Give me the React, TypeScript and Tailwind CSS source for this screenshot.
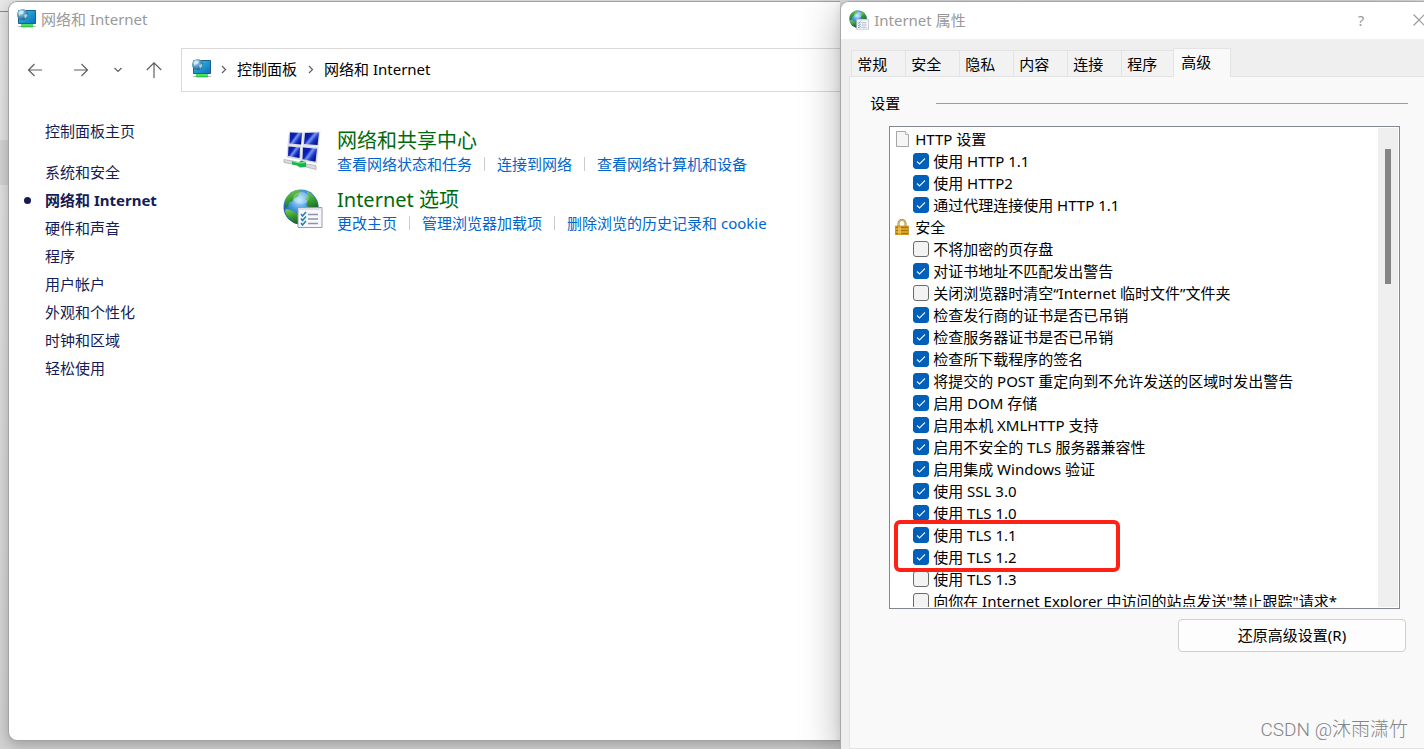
import React, { useState } from 'react';

const NetworkPlaceIcon: React.FC = () => (
  <svg className="size-5 shrink-0" viewBox="0 0 20 20" aria-hidden="true">
    <defs>
      <linearGradient id="npScreen" x1="0" y1="0" x2="1" y2="1">
        <stop offset="0" stopColor="#35c3dc" />
        <stop offset="1" stopColor="#0c6fc0" />
      </linearGradient>
      <radialGradient id="npGlobe" cx="0.35" cy="0.3" r="0.75">
        <stop offset="0" stopColor="#d3ecf8" />
        <stop offset="0.5" stopColor="#5a9fc8" />
        <stop offset="1" stopColor="#1c5c8c" />
      </radialGradient>
    </defs>
    <path d="M1 17.5h18" stroke="#b9b9b9" />
    <path d="M4 15h12v3H4z" fill="#4fdf63" />
    <path d="M4 17.3h12v1H4z" fill="#24b443" />
    <path d="M1.5 1.500h17v13h-17z" fill="url(#npScreen)" stroke="#1b5f8d" />
    <circle cx="5.500" cy="5.500" r="5.500" fill="url(#npGlobe)" />
    <path d="M2 3.500 5 1.500l2 1.200-1 2-2.500.6L2 7zM7 6l3-1 .6 2L8 10z" fill="#e7f5fb" opacity="0.65" />
  </svg>
);

const GlobeListIcon: React.FC<{ className: string }> = ({ className }) => (
  <svg className={className} viewBox="0 0 40 40" aria-hidden="true">
    <defs>
      <radialGradient id="glSea" cx="0.45" cy="0.3" r="0.75">
        <stop offset="0" stopColor="#b5e6ff" />
        <stop offset="0.4" stopColor="#4093dc" />
        <stop offset="0.8" stopColor="#164a9c" />
        <stop offset="1" stopColor="#102c66" />
      </radialGradient>
      <linearGradient id="glLand" x1="0" y1="0" x2="0.3" y2="1">
        <stop offset="0" stopColor="#86cd62" />
        <stop offset="0.5" stopColor="#3fa635" />
        <stop offset="1" stopColor="#1d6b2a" />
      </linearGradient>
    </defs>
    <circle cx="18" cy="18" r="17.500" fill="url(#glSea)" />
    <path d="M2 11C5 5 10 1.500 15 .8l4 1.700-3 2-1 3-4 2-2 3-3 1-1 4-3 2z" fill="url(#glLand)" />
    <path d="m3 20 5 1 5 3 3 4-2 3v4C8 33 3 28 2 22z" fill="url(#glLand)" />
    <path d="m24 2 6 4 4 6 1.300 6-1 3-4-3-4 1-3-3 1-4-2-2 2-3z" fill="url(#glLand)" />
    <ellipse cx="18" cy="9" rx="8" ry="6" fill="#fff" opacity="0.25" />
    <path d="M15 18.500h24v20H15z" fill="#f8f8fb" stroke="#9a9da8" />
    <path d="M15.500 19h23v2h-23z" fill="#dcdfe8" />
    <path d="M25 25.500h10M25 30h10M25 34.500h10" stroke="#8b94a8" strokeWidth="1.300" />
    <path d="m18 25 1.500 2 3.500-4M18 29.500l1.500 2 3.500-4M18 34l1.500 2 3.500-4" fill="none" stroke="#1980c0" strokeWidth="1.500" />
  </svg>
);

const NetworkCenterIcon: React.FC = () => (
  <svg className="size-10 shrink-0" viewBox="0 0 40 40" aria-hidden="true">
    <defs>
      <linearGradient id="ncScreen" x1="0" y1="0" x2="1" y2="0.7">
        <stop offset="0" stopColor="#0718a0" />
        <stop offset="0.4" stopColor="#0b20b8" />
        <stop offset="0.55" stopColor="#7795ee" />
        <stop offset="0.75" stopColor="#1733c9" />
        <stop offset="1" stopColor="#051080" />
      </linearGradient>
    </defs>
    <g fill="#d9dce2">
      <path d="m6 1.500 14 .5-1.500 14L4.500 15z" />
      <path d="m20.500 2 17-.5-2 15-16-1z" />
      <path d="m4.500 15 14 1-1 14-14-2.500z" />
      <path d="m19 16 16.500 1-1.500 16.500-16-3z" />
    </g>
    <g fill="url(#ncScreen)">
      <path d="m7 2.500 12 .5-1 11.500-11.500-1z" />
      <path d="m22 3 14-.5-1.500 12.500-13.500-1z" />
      <path d="m5.500 16.500 11.500 1-.5 10.500L5 26z" />
      <path d="m20 17.500 14 1.200-1.500 13-13-2.500z" />
    </g>
    <path d="m1 29.500 11 2v3l-11-2zM23 34l10 1.500v4L23 37z" fill="#d9dddc" stroke="#a9afad" strokeWidth="0.800" />
    <path d="m9 31 7 1 2-1.500 5 1.500v5l-6 .5-3-2-5-1z" fill="#18b64a" />
    <path d="m10 31.500 7 1.500 5-.5" fill="none" stroke="#8ceaa2" />
  </svg>
);

const PageIcon: React.FC = () => (
  <svg className="size-4 shrink-0" viewBox="0 0 16 16" aria-hidden="true">
    <path d="M1.500.5h9l3 3v12h-12z" fill="#f5f5f5" stroke="#a5a5a5" />
    <path d="M10.500.5v3h3" fill="#fff" stroke="#b5b5b5" />
  </svg>
);

const LockIcon: React.FC = () => (
  <svg className="size-4 shrink-0" viewBox="0 0 16 16" aria-hidden="true">
    <path d="M3.500 8V4.500a3.500 3.500 0 0 1 7 0V8" fill="none" stroke="#a8863a" strokeWidth="2" />
    <path d="M3.500 8V4.500a3.500 3.500 0 0 1 7 0V8" fill="none" stroke="#e6d5a0" strokeWidth="0.700" />
    <path d="M.5 7h13v9H.5z" fill="#dba324" />
    <path d="M1 8.500h12M1 11.500h12M1 14.500h12" stroke="#a8730c" />
    <path d="M3 7.500h3v8H3z" fill="#f6d36a" opacity="0.600" />
    <path d="M.5 7h13v9H.5z" fill="none" stroke="#b17f18" strokeWidth="0.700" />
  </svg>
);

const ArrowIcon: React.FC<{ d: string; className: string }> = ({ d, className }) => (
  <svg className={className} viewBox="0 0 16 16" fill="none" stroke="currentColor" strokeWidth="1.2" aria-hidden="true">
    <path d={d} />
  </svg>
);

const categories = ['系统和安全', '网络和 Internet', '硬件和声音', '程序', '用户帐户', '外观和个性化', '时钟和区域', '轻松使用'];

const sections = [
  {
    title: '网络和共享中心',
    icon: <NetworkCenterIcon />,
    links: ['查看网络状态和任务', '连接到网络', '查看网络计算机和设备'],
  },
  {
    title: 'Internet 选项',
    icon: <GlobeListIcon className="size-10 shrink-0" />,
    links: ['更改主页', '管理浏览器加载项', '删除浏览的历史记录和 cookie'],
  },
];

const tabs = ['常规', '安全', '隐私', '内容', '连接', '程序', '高级'];

const settingGroups = [
  {
    name: 'HTTP 设置',
    icon: <PageIcon />,
    options: [
      { label: '使用 HTTP 1.1', on: true },
      { label: '使用 HTTP2', on: true },
      { label: '通过代理连接使用 HTTP 1.1', on: true },
    ],
  },
  {
    name: '安全',
    icon: <LockIcon />,
    options: [
      { label: '不将加密的页存盘', on: false },
      { label: '对证书地址不匹配发出警告', on: true },
      { label: '关闭浏览器时清空“Internet 临时文件”文件夹', on: false },
      { label: '检查发行商的证书是否已吊销', on: true },
      { label: '检查服务器证书是否已吊销', on: true },
      { label: '检查所下载程序的签名', on: true },
      { label: '将提交的 POST 重定向到不允许发送的区域时发出警告', on: true },
      { label: '启用 DOM 存储', on: true },
      { label: '启用本机 XMLHTTP 支持', on: true },
      { label: '启用不安全的 TLS 服务器兼容性', on: true },
      { label: '启用集成 Windows 验证', on: true },
      { label: '使用 SSL 3.0', on: true },
      { label: '使用 TLS 1.0', on: true },
      { label: '使用 TLS 1.1', on: true },
      { label: '使用 TLS 1.2', on: true },
      { label: '使用 TLS 1.3', on: false },
      { label: '向你在 Internet Explorer 中访问的站点发送"禁止跟踪"请求*', on: false },
    ],
  },
];

const OptionRow: React.FC<{ label: string; on: boolean }> = ({ label, on }) => (
  <label className="flex h-[22px] items-center gap-1 pl-[18px] whitespace-nowrap">
    <span className="grid size-4 shrink-0">
      <input
        type="checkbox"
        defaultChecked={on}
        className="peer col-start-1 row-start-1 size-4 appearance-none rounded-[3px] border border-[#6b6b6b] bg-[#f3f3f3] checked:border-[#005fb8] checked:bg-[#005fb8]"
      />
      <svg
        className="pointer-events-none invisible col-start-1 row-start-1 size-4 peer-checked:visible"
        viewBox="0 0 16 16"
        fill="none"
        stroke="#e6f1fb"
        strokeWidth="1.1"
        aria-hidden="true"
      >
        <path d="m4 8.500 2.500 2.500L12 5.500" />
      </svg>
    </span>
    {label}
  </label>
);

// Sliver of the window that sits behind the explorer
const BackgroundEdge: React.FC = () => (
  <div className="w-2 shrink-0" aria-hidden="true">
    <div className="h-3 border-b border-[#8a8a8a] bg-[#e8e8e8]" />
    <div className="mt-32 h-[45px] bg-[#d3d3d3]" />
  </div>
);

const ExplorerWindow: React.FC = () => (
  <main className="mt-px mb-2 flex min-w-0 flex-1 flex-col rounded-l-[9px] border border-r-0 border-[#a3a3a3] bg-white shadow-[0_4px_14px_rgba(0,0,0,0.25)]">
    <header className="flex h-[34px] items-center gap-1 pl-2 text-[#999]">
      <NetworkPlaceIcon />
      <h1>网络和 Internet</h1>
    </header>

    <div className="mt-3 flex h-11 items-center text-[#606060]">
      <nav className="flex w-[172px] shrink-0 items-center pl-[18px]">
        <button aria-label="后退"><ArrowIcon className="size-4" d="M15 8H1.500M7.500 2 1.500 8l6 6" /></button>
        <button aria-label="前进" className="ml-[30px]"><ArrowIcon className="size-4" d="M1 8h13.500M8.500 2l6 6-6 6" /></button>
        <button aria-label="最近位置" className="ml-[21px]"><ArrowIcon className="size-4" d="m4.500 6 3.500 3.500L11.500 6" /></button>
        <button aria-label="上移" className="ml-5"><ArrowIcon className="size-4" d="M8 16V1M.8 8 8 .8 15.200 8" /></button>
      </nav>
      <nav className="flex h-11 min-w-0 flex-1 items-center border border-r-0 border-[#d9d9d9] pb-[2px] pl-[10px] whitespace-nowrap">
        <NetworkPlaceIcon />
        <ArrowIcon className="ml-1 size-4 shrink-0" d="m6 5 3.500 3.500L6 12" />
        <a href="#panel" className="ml-[5px] text-black">控制面板</a>
        <ArrowIcon className="ml-[6px] size-4 shrink-0" d="m6 5 3.500 3.500L6 12" />
        <a href="#network" className="ml-[5px] text-black">网络和 Internet</a>
      </nav>
    </div>

    <div className="flex flex-1 pt-[25px]">
      <aside className="w-[274px] shrink-0 pl-[15px] leading-7 text-[#151c55]">
        <a href="#home" className="ml-[21px]">控制面板主页</a>
        <ul className="mt-[13px]">
          {categories.map((item) => (
            <li key={item} className="flex items-center">
              {item === '网络和 Internet' ? (
                <>
                  <span className="mr-[14px] size-[7px] rounded-full bg-[#151c55]" />
                  <a href="#network" className="font-bold">{item}</a>
                </>
              ) : (
                <a href="#category" className="ml-[21px]">{item}</a>
              )}
            </li>
          ))}
        </ul>
      </aside>

      <div className="flex min-w-0 flex-1 flex-col gap-[7px] pt-[11px]">
        {sections.map((section) => (
          <section key={section.title} className="flex h-[52px] gap-[14px] whitespace-nowrap">
            <div className="pt-[2px]">{section.icon}</div>
            <div>
              <h2 className="text-xl leading-[26px] text-[#006a0a]">
                <a href="#section">{section.title}</a>
              </h2>
              <ul className="flex leading-5 text-[#0066cc]">
                {section.links.map((link, i) => (
                  <li key={link} className="flex items-center">
                    {i > 0 && <span className="mx-3 h-[14px] w-px bg-[#ccc]" />}
                    <a href="#task">{link}</a>
                  </li>
                ))}
              </ul>
            </div>
          </section>
        ))}
      </div>
    </div>
  </main>
);

const InternetPropertiesDialog: React.FC = () => {
  const [active, setActive] = useState('高级');

  return (
    <aside className="z-10 mt-px flex w-[41%] shrink-0 flex-col overflow-hidden rounded-tl-[9px] border-t border-l border-[#a8a8a8] bg-[#efefef] shadow-[0_8px_40px_rgba(0,0,0,0.3),0_0_8px_rgba(0,0,0,0.1)]">
      <header className="flex h-[37px] items-center bg-white pb-[2px] pl-2 text-[#999]">
        <GlobeListIcon className="size-5 shrink-0" />
        <h2 className="ml-[5px] flex-1">Internet 属性</h2>
        <button aria-label="帮助" className="w-[58px] text-center">?</button>
        <button aria-label="关闭" className="-mr-6 flex w-[58px] justify-center">
          <ArrowIcon className="size-4" d="m2.500 2.500 11 11M13.500 2.500l-11 11" />
        </button>
      </header>

      <div className="mt-[9px] flex items-end pl-[10px]" role="tablist">
        {tabs.map((tab) => (
          <button
            key={tab}
            role="tab"
            aria-selected={tab === active}
            onClick={() => setActive(tab)}
            className={
              tab === active
                ? 'z-10 -mb-px -ml-[2px] h-[29px] w-[58px] border border-b-0 border-[#e3e3e3] bg-[#f9f9f9] pr-3 pb-[2px] text-center'
                : 'h-[26px] w-[54px] border border-r-0 border-b-0 border-[#e3e3e3] bg-[#f2f2f2] pl-[5px] text-left'
            }
          >
            {tab}
          </button>
        ))}
      </div>

      <div className="ml-2 flex flex-1 flex-col border-y border-l border-[#e3e3e3] bg-[#f9f9f9] pt-[14px] pr-4 pl-5">
        <div className="flex items-center">
          <h3 className="w-[66px] leading-6">设置</h3>
          <hr className="flex-1 border-[#9d9d9d]" />
        </div>

        <div className="relative mt-[11px] mr-2 ml-[19px] flex h-[483px] overflow-hidden border border-[#828790] bg-white p-px">
          <div className="min-w-0 flex-1 overflow-hidden pl-1">
            {settingGroups.map((group) => (
              <fieldset key={group.name}>
                <legend className="flex h-[22px] items-center gap-1">
                  {group.icon}
                  {group.name}
                </legend>
                {group.options.map((option) => (
                  <OptionRow key={option.label} label={option.label} on={option.on} />
                ))}
              </fieldset>
            ))}
          </div>
          <div className="flex w-5 shrink-0 justify-center bg-[#efefef] pt-[21px]">
            <div className="h-[135px] w-[6px] bg-[#858585]" />
          </div>
          <div className="pointer-events-none absolute top-[393px] left-1 h-[52px] w-[226px] rounded-md border-4 border-[#ff2116]" />
        </div>

        <button className="mt-[10px] mr-[2px] h-[33px] w-[228px] self-end rounded-[4px] border border-[#cfcfcf] bg-[#fdfdfd] pb-[2px]">
          还原高级设置(R)
        </button>

        <p className="mt-auto pb-1 text-right font-[Roboto,'Noto_Sans_CJK_SC',sans-serif] text-[19px] leading-7 font-light text-[#858585]">
          CSDN @沐雨潇竹
        </p>
      </div>
    </aside>
  );
};

const App: React.FC = () => (
  <div className="flex min-h-screen overflow-hidden bg-linear-to-b from-[#e6e6e6] to-[#d2d2d2] font-['Noto_Sans','Noto_Sans_CJK_SC',sans-serif] text-[15px] leading-5 text-black">
    <BackgroundEdge />
    <ExplorerWindow />
    <InternetPropertiesDialog />
  </div>
);

export default App;
